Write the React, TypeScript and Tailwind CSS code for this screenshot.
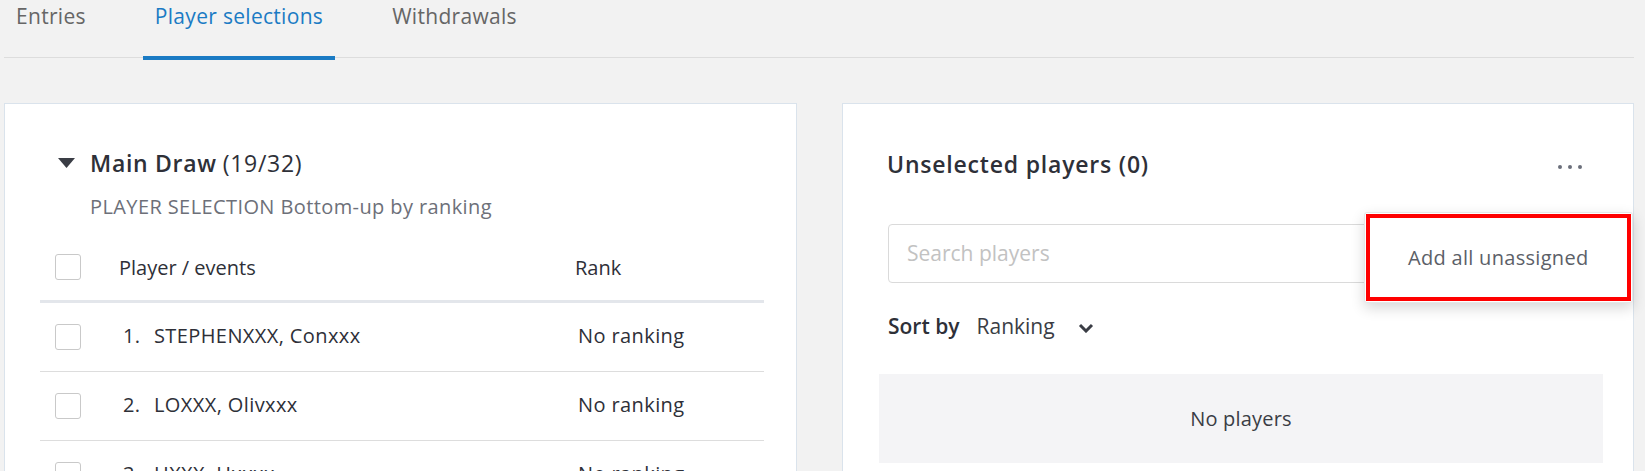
import React from "react";

const players = [
  { n: "1.", name: "STEPHENXXX, Conxxx" },
  { n: "2.", name: "LOXXX, Olivxxx" },
  { n: "3.", name: "HXXX, Hxxxx" },
];

function Checkbox() {
  return <div className="h-[26px] w-[26px] rounded-[3px] border border-[#c9c9c9] bg-white" />;
}

function Tabs() {
  const tabs = ["Entries", "Player selections", "Withdrawals"];
  return (
    <div className="flex gap-[45px] border-b border-[#dddddd]">
      {tabs.map((t) => (
        <div
          key={t}
          className={
            t === "Player selections"
              ? "-mb-[3px] h-[60px] border-b-4 border-[#1b7bc4] px-3 pt-[2px] text-[21px] leading-[28px] tracking-[0.3px] text-[#1b7bc4]"
              : "-mb-[3px] h-[60px] border-b-4 border-transparent px-3 pt-[2px] text-[21px] leading-[28px] tracking-[0.3px] text-[#666666]"
          }
        >
          {t}
        </div>
      ))}
    </div>
  );
}

function LeftCard() {
  return (
    <div className="w-[793px] border border-[#dae3ec] bg-white pl-[35px] pr-[32px] pt-[45px]">
      <div className="flex h-[28px] items-center tracking-[0.7px]">
        <svg width="17" height="10" viewBox="0 0 17 10" className="ml-[18px] mr-[15px]">
          <polygon points="0,0 17,0 8.5,10" fill="#3a3d45" />
        </svg>
        <span className="text-[23px] font-semibold text-[#2e3038]">Main Draw</span>
        <span className="ml-[6px] text-[23px] text-[#2e3038]">(19/32)</span>
      </div>
      <div className="ml-[50px] mt-[18px] text-[20px] leading-[24px] tracking-[0.4px] text-[#6d7079]">
        PLAYER SELECTION Bottom-up by ranking
      </div>
      <div className="mt-[15px] flex h-[69px] items-center border-b-[3px] border-[#e3e6eb] text-[20px] font-medium text-[#2e3038]">
        <div className="w-[79px] pl-[15px]">
          <Checkbox />
        </div>
        <div className="w-[456px] pt-[2px]">Player / events</div>
        <div className="pt-[2px]">Rank</div>
      </div>
      {players.map((p) => (
        <div
          key={p.n}
          className="flex h-[69px] items-center border-b border-[#dddddd] text-[20px] tracking-[0.4px] text-[#2e3038]"
        >
          <div className="w-[79px] pl-[15px]">
            <Checkbox />
          </div>
          <div className="flex w-[456px] -mt-[2px]">
            <span className="w-[35px] pl-1">{p.n}</span>
            <span>{p.name}</span>
          </div>
          <div className="-mt-[2px] pl-[3px]">No ranking</div>
        </div>
      ))}
    </div>
  );
}

function RightCard() {
  return (
    <div className="relative flex-1 border border-[#dae3ec] bg-white pl-[36px] pr-[30px] pt-[46px]">
      <div className="flex h-[28px] items-center justify-between">
        <span className="ml-2 text-[23px] font-semibold tracking-[0.8px] text-[#2e3038]">Unselected players (0)</span>
        <div className="mr-[21px] mt-[6px] flex gap-[6px]">
          <span className="h-[4px] w-[4px] rounded-full bg-[#6b6f7b]" />
          <span className="h-[4px] w-[4px] rounded-full bg-[#6b6f7b]" />
          <span className="h-[4px] w-[4px] rounded-full bg-[#6b6f7b]" />
        </div>
      </div>
      <div className="ml-[9px] mr-[10px] mt-[46px] flex h-[59px] items-center rounded-[4px] border border-[#dadada] pl-[18px] text-[21px] text-[#c2c2c2]">
        Search players
      </div>
      <div className="ml-[9px] mt-[30px] flex h-[28px] items-center text-[21px]">
        <span className="font-semibold text-[#2e3038]">Sort by</span>
        <span className="ml-[17px] text-[#3a3d45]">Ranking</span>
        <svg width="16" height="10" viewBox="0 0 16 10" className="ml-[23px] mt-[2px]">
          <polyline points="2,2 8,8 14,2" fill="none" stroke="#3a3d45" strokeWidth="3" />
        </svg>
      </div>
      <div className="mt-[33px] flex h-[89px] items-center justify-center bg-[#f4f4f6] text-[20px] tracking-[0.2px] text-[#3a3d45]">
        No players
      </div>
      <div className="absolute right-0 top-[108px] w-[269px] rounded-[3px] border border-[#e6e6e6] bg-white p-[1px] shadow-[0_5px_14px_rgba(0,0,0,0.16)]">
        <div className="flex h-[87px] items-center border-4 border-[#ff0000] pl-[38px] text-[20px] tracking-[0.3px] text-[#5c5f68]">
          Add all unassigned
        </div>
      </div>
    </div>
  );
}

export default function App() {
  return (
    <div className="h-[471px] w-full overflow-hidden bg-[#f2f2f2] font-['Open_Sans',sans-serif]">
      <div className="ml-1 mr-[11px]">
        <Tabs />
        <div className="mt-[45px] flex gap-[45px]">
          <LeftCard />
          <RightCard />
        </div>
      </div>
    </div>
  );
}
